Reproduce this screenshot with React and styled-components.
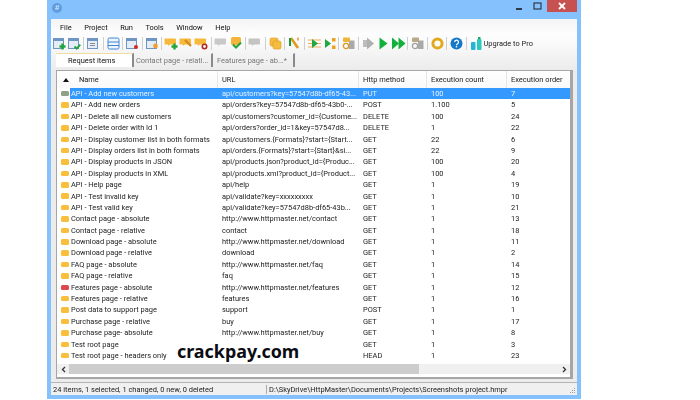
import React from 'react';
import styled, { createGlobalStyle } from 'styled-components';

const uiFont = `Roboto, 'Liberation Sans', Arial, sans-serif`
const uiSize = '7.45px'

const Reset = createGlobalStyle`
  html, body { margin: 0; padding: 0; background: #fff; }
`

const Page = styled.div`
  position: relative;
  width: 700px;
  height: 400px;
  overflow: hidden;
  background: #fff;
  font-family: ${uiFont};
`

const Frame = styled.div`
  margin-left: 47px;
  width: 534px;
  height: 399px;
  background: #85c2fd;
  display: flex;
  flex-direction: column;
  filter: blur(0.4px);
`

const TitleBar = styled.div`
  height: 19px;
  flex: none;
  display: flex;
  align-items: flex-start;
  justify-content: space-between;
  padding: 0 4px 0 4px;
`

const AppIcon = styled.div`
  width: 10px;
  height: 10px;
  margin: 3px 0 0 1px;
  border-radius: 50%;
  background: #5f9de0;
  color: #d7e8fa;
  font-size: 8px;
  line-height: 10px;
  text-align: center;
`

const WindowButtons = styled.div`
  display: flex;
  align-items: flex-start;
`

const WinBtn = styled.div`
  width: 19px;
  height: 12px;
  display: flex;
  align-items: center;
  justify-content: center;
`

const CloseBtn = styled.div`
  width: 30px;
  height: 12px;
  background: #c75050;
  color: #fff;
  display: flex;
  align-items: center;
  justify-content: center;
`

const Client = styled.div`
  flex: 1;
  margin: 0 4px 4px;
  display: flex;
  flex-direction: column;
  background: linear-gradient(#f4f4f4 0, #fdfdfd 14px, #fbfbfb 22px, #ececec 50px);
  min-height: 0;
`

const MenuBar = styled.div`
  height: 16px;
  flex: none;
  display: flex;
  align-items: center;
  gap: 12.5px;
  padding-left: 9px;
  font-size: ${uiSize};
  color: #111;
`

const ToolBar = styled.div`
  height: 18px;
  flex: none;
  display: flex;
  align-items: center;
  padding-left: 0.5px;
`

const ToolIcon = styled.svg`
  width: 15px;
  height: 15px;
  flex: none;
  margin-top: -2px;
`

const ToolSep = styled.div`
  width: 1px;
  height: 13px;
  flex: none;
  margin: -2px 2px 0 1.5px;
  background: #cfcfcf;
`

const UpgradeLabel = styled.span`
  margin: -2px 0 0 0;
  font-size: ${uiSize};
  color: #222;
`

const TabStrip = styled.div`
  height: 17px;
  flex: none;
  display: flex;
  padding-left: 5px;
`

const Tab = styled.div`
  height: 14px;
  width: ${p => p.$width}px;
  box-sizing: border-box;
  font-size: ${uiSize};
  line-height: 14px;
  white-space: nowrap;
  overflow: hidden;
  padding-left: ${p => p.$pad}px;
  color: ${p => (p.$active ? '#111' : '#777')};
  background: ${p => (p.$active ? '#fff' : 'transparent')};
  border-top: 1px solid ${p => (p.$active ? '#f3dca0' : 'transparent')};
  border-right: 2px solid #8a8a8a;
  margin-right: 1px;
`

const Panel = styled.div`
  height: 309px;
  flex: none;
  margin: 0 4px 0 5px;
  box-sizing: border-box;
  background: #fff;
  border: 1px solid #a6a6a6;
  border-bottom-width: 2px;
  border-right-width: 3px;
  color: #222;
  font-size: ${uiSize};
  display: flex;
  flex-direction: column;
`

const HeaderRow = styled.div`
  height: 17px;
  flex: none;
  display: grid;
  grid-template-columns: 161px 141px 68px 80px 1fr;
  background: linear-gradient(#fff, #f9f9f9);
`

const HeaderCell = styled.div`
  display: flex;
  align-items: center;
  padding-left: ${p => p.$pad || 4}px;
  border-right: 1px solid #e6e6e6;
  color: #222;
  line-height: 17px;
  white-space: nowrap;
  overflow: hidden;
  &:last-child { border-right: none; }
`

const SortArrow = styled.span`
  width: 0;
  height: 0;
  margin: 0 10px 0 -16px;
  border-left: 3px solid transparent;
  border-right: 3px solid transparent;
  border-bottom: 4px solid #111;
`

const Rows = styled.div`
  flex: 1;
  min-height: 0;
`

const Row = styled.div`
  height: 11.4px;
  display: flex;
`

const RowIconBox = styled.div`
  width: 13px;
  flex: none;
  display: flex;
  align-items: center;
  padding-left: 4px;
  box-sizing: border-box;
`

const Envelope = styled.div`
  width: 8px;
  height: 5.5px;
  border-radius: 1.5px;
  background: ${p => (p.$tone === 'red' ? '#e0474c' : p.$tone === 'done' ? '#8fa085' : '#f9bf3b')};
`

const RowBody = styled.div`
  flex: 1;
  display: grid;
  grid-template-columns: 148px 141px 68px 80px 1fr;
  background: ${p => (p.$selected ? '#3399ff' : 'transparent')};
  color: ${p => (p.$selected ? '#e6f2ff' : '#222')};
  line-height: 12.4px;
`

const Cell = styled.div`
  padding-left: ${p => p.$pad || 4}px;
  white-space: nowrap;
  overflow: hidden;
`

const HScroll = styled.div`
  height: 10px;
  flex: none;
  margin-bottom: 3px;
  display: flex;
  align-items: center;
  background: #f0f0f0;
  color: #444;
`

const ScrollArrow = styled.div`
  width: 12px;
  flex: none;
  display: flex;
  justify-content: center;
`

const ScrollThumb = styled.div`
  width: 350px;
  height: 10px;
  flex: none;
  background: #cdcdcd;
`

const ScrollRest = styled.div`
  flex: 1;
`

const StatusBar = styled.div`
  margin-top: 3px;
  flex: 1;
  display: flex;
  align-items: center;
  background: #f0f0f0;
  border-top: 1px solid #b5b5b5;
  font-size: ${uiSize};
  color: #222;
`

const StatusLeft = styled.div`
  width: 216px;
  flex: none;
  padding-left: 2px;
  box-sizing: border-box;
  border-right: 1px solid #aaa;
  white-space: nowrap;
`

const StatusRight = styled.div`
  flex: 1;
  padding-left: 2px;
  white-space: nowrap;
`

const Grip = styled.svg`
  width: 7px;
  height: 7px;
  flex: none;
  align-self: flex-end;
  margin: 0 1px 1px 0;
`

const Watermark = styled.div`
  position: absolute;
  left: 177px;
  top: 338px;
  font-family: 'Noto Sans', sans-serif;
  font-weight: 700;
  font-size: 17.9px;
  line-height: 26px;
  color: #0c0c14;
`

const Badge = ({ kind }) => {
  if (kind === 'plus') return <path d="M10.5 7.5v6M7.5 10.5h6" stroke="#22a53c" strokeWidth="2.4" />
  if (kind === 'check') return <path d="M7.5 10.5l2.2 2.2 3.6-4" fill="none" stroke="#22a53c" strokeWidth="1.8" />
  if (kind === 'red') return <circle cx="11" cy="11" r="2" fill="#d02a20" />
  if (kind === 'gear') return <circle cx="10.5" cy="10" r="2.4" fill="#f0a030" />
  if (kind === 'wrench') return <path d="M6 4l6 6" stroke="#d98a1e" strokeWidth="2.4" />
  if (kind === 'ring') return <circle cx="10.5" cy="10.5" r="2.2" fill="none" stroke="#b0281e" strokeWidth="1.6" />
  return null
}

const DocIcon = ({ badge, lines }) => (
  <ToolIcon viewBox="0 0 15 15">
    <rect x="1.5" y="2.5" width="10" height="10" fill="#e4ecf6" stroke="#6f95c4" />
    <rect x="1.5" y="2.5" width="10" height="2.5" fill="#6f95c4" />
    {lines && <path d="M4 7.5h5M4 9.5h5" stroke="#8d8d8d" />}
    <Badge kind={badge} />
  </ToolIcon>
)

const SaveIcon = () => (
  <ToolIcon viewBox="0 0 15 15">
    <rect x="2" y="2" width="11" height="11" rx="1.5" fill="#eef5fc" stroke="#3f86d6" />
    <path d="M2 6h11M2 9.5h11" stroke="#3f86d6" />
  </ToolIcon>
)

const MailIcon = ({ badge, color = '#f6b93b' }) => (
  <ToolIcon viewBox="0 0 15 15">
    <path d="M1 2.5h10a1 1 0 0 1 1 1v4a1 1 0 0 1-1 1H6L4 10V8.500H1a.5.5 0 0 1-.5-.5V3a.5.5 0 0 1 .5-.5z" fill={color} />
    <Badge kind={badge} />
  </ToolIcon>
)

const BigMailCheck = () => (
  <ToolIcon viewBox="0 0 15 15">
    <rect x="2" y="1" width="10" height="8" rx="1.5" fill="#f6b53a" />
    <path d="M4 8.500l3 3 5-5" fill="none" stroke="#22a53c" strokeWidth="2" />
  </ToolIcon>
)

const StackIcon = () => (
  <ToolIcon viewBox="0 0 15 15">
    <rect x="2" y="2" width="8" height="8" rx="1.500" fill="#f5bd3f" stroke="#dc9a20" strokeWidth="0.6" />
    <rect x="5" y="5" width="8" height="8" rx="1.500" fill="#f5bd3f" stroke="#dc9a20" strokeWidth="0.6" />
  </ToolIcon>
)

const WandIcon = () => (
  <ToolIcon viewBox="0 0 15 15">
    <path d="M4 2l7 10" stroke="#e09a1c" strokeWidth="2.600" />
    <path d="M3 2v8" stroke="#169c3c" strokeWidth="2" />
    <path d="M11 1.500v3" stroke="#e09a1c" strokeWidth="1.500" />
  </ToolIcon>
)

const LinesPlayIcon = () => (
  <ToolIcon viewBox="0 0 15 15">
    <path d="M1 4h13M1 7.500h13M1 11h13" stroke="#f0b055" strokeWidth="1.200" />
    <path d="M5 3l6 4.500-6 4.500z" fill="#1fa83c" />
  </ToolIcon>
)

const BranchIcon = () => (
  <ToolIcon viewBox="0 0 15 15">
    <path d="M3 3l6 4.500-6 4.500z" fill="#1fa83c" />
    <rect x="10" y="2" width="3.500" height="3.500" fill="#eea020" />
    <rect x="10" y="9.500" width="3.500" height="3.500" fill="#eea020" />
  </ToolIcon>
)

const ServerIcon = ({ gray }) => (
  <ToolIcon viewBox="0 0 15 15">
    <rect x="8" y="4.500" width="5.500" height="8.500" fill="#a9a9a9" />
    <rect x="2" y="1.500" width="7" height="4.500" rx="1" fill={gray ? '#b9a98a' : '#efb43a'} />
    <circle cx="5" cy="10" r="2.600" fill="none" stroke={gray ? '#a2a2a2' : '#dc9a20'} strokeWidth="1.300" />
  </ToolIcon>
)

const PlayIcon = ({ color = '#12b03c' }) => (
  <ToolIcon viewBox="0 0 15 15">
    <path d="M3.500 1.500l8 6-8 6z" fill={color} />
  </ToolIcon>
)

const DoublePlayIcon = () => (
  <ToolIcon viewBox="0 0 15 15">
    <path d="M1 1.500l7 6-7 6z" fill="#12b03c" />
    <path d="M7.500 1.500l7 6-7 6z" fill="#12b03c" />
  </ToolIcon>
)

const GrayForwardIcon = () => (
  <ToolIcon viewBox="0 0 15 15">
    <rect x="2" y="4" width="5" height="7" fill="#bdbdbd" />
    <path d="M6 1.500l7 6-7 6z" fill="#b0b0b0" />
  </ToolIcon>
)

const RingIcon = () => (
  <ToolIcon viewBox="0 0 15 15">
    <circle cx="7.500" cy="7.500" r="4.600" fill="none" stroke="#e2a91f" strokeWidth="3" />
  </ToolIcon>
)

const HelpIcon = () => (
  <ToolIcon viewBox="0 0 15 15">
    <circle cx="7.500" cy="7.500" r="6" fill="#1678c8" />
    <path d="M5.700 6a1.900 1.900 0 1 1 2.800 1.700c-.7.400-1 .7-1 1.500" fill="none" stroke="#fff" strokeWidth="1.300" />
    <rect x="6.800" y="10" width="1.400" height="1.400" fill="#fff" />
  </ToolIcon>
)

const UpgradeIcon = () => (
  <ToolIcon viewBox="0 0 15 15">
    <rect x="2" y="6" width="4.500" height="8" rx="1" fill="#22b5d8" />
    <rect x="8" y="3" width="4.500" height="11" rx="1" fill="#2cc8c0" />
    <rect x="9" y="1" width="2.500" height="2" fill="#2aa060" />
  </ToolIcon>
)

const rows = [
  ['API - Add new customers', 'api/customers?key=57547d8b-df65-43...', 'PUT', '100', '7', 'done'],
  ['API - Add new orders', 'api/orders?key=57547d8b-df65-43b0-...', 'POST', '1.100', '5'],
  ['API - Delete all new customers', 'api/customers?customer_id={Custome...', 'DELETE', '100', '24'],
  ['API - Delete order with Id 1', 'api/orders?order_id=1&key=57547d8...', 'DELETE', '1', '22'],
  ['API - Display customer list in both formats', 'api/customers.{Formats}?start={Start...', 'GET', '22', '6'],
  ['API - Display orders list in both formats', 'api/orders.{Formats}?start={Start}&si...', 'GET', '22', '9'],
  ['API - Display products in JSON', 'api/products.json?product_id={Produc...', 'GET', '100', '20'],
  ['API - Display products in XML', 'api/products.xml?product_id={Product...', 'GET', '100', '4'],
  ['API - Help page', 'api/help', 'GET', '1', '19'],
  ['API - Test invalid key', 'api/validate?key=xxxxxxxxx', 'GET', '1', '10'],
  ['API - Test valid key', 'api/validate?key=57547d8b-df65-43b...', 'GET', '1', '21'],
  ['Contact page - absolute', 'http://www.httpmaster.net/contact', 'GET', '1', '13'],
  ['Contact page - relative', 'contact', 'GET', '1', '18'],
  ['Download page - absolute', 'http://www.httpmaster.net/download', 'GET', '1', '11'],
  ['Download page - relative', 'download', 'GET', '1', '2'],
  ['FAQ page - absolute', 'http://www.httpmaster.net/faq', 'GET', '1', '14'],
  ['FAQ page - relative', 'faq', 'GET', '1', '15'],
  ['Features page - absolute', 'http://www.httpmaster.net/features', 'GET', '1', '12', 'red'],
  ['Features page - relative', 'features', 'GET', '1', '16'],
  ['Post data to support page', 'support', 'POST', '1', '1'],
  ['Purchase page - relative', 'buy', 'GET', '1', '17'],
  ['Purchase page- absolute', 'http://www.httpmaster.net/buy', 'GET', '1', '8'],
  ['Test root page', '', 'GET', '1', '3'],
  ['Test root page - headers only', '', 'HEAD', '1', '23'],
]

const App = () => (
  <Page>
    <Reset />
    <Frame>
      <TitleBar>
        <AppIcon>#</AppIcon>
        <WindowButtons>
          <WinBtn>
            <svg width="8" height="8" viewBox="0 0 8 8"><rect x="1" y="6" width="6" height="2" fill="#2d3a4a" /></svg>
          </WinBtn>
          <WinBtn>
            <svg width="9" height="8" viewBox="0 0 9 8"><rect x="1" y="1" width="7" height="6" fill="none" stroke="#2d3a4a" strokeWidth="1.200" /></svg>
          </WinBtn>
          <CloseBtn>
            <svg width="8" height="8" viewBox="0 0 8 8"><path d="M1 1l6 6M7 1l-6 6" stroke="#fff" strokeWidth="1.800" /></svg>
          </CloseBtn>
        </WindowButtons>
      </TitleBar>
      <Client>
        <MenuBar>
          <span>File</span>
          <span>Project</span>
          <span>Run</span>
          <span>Tools</span>
          <span>Window</span>
          <span>Help</span>
        </MenuBar>
        <ToolBar>
          <DocIcon badge="plus" />
          <DocIcon badge="check" />
          <ToolSep />
          <DocIcon lines />
          <ToolSep />
          <SaveIcon />
          <ToolSep />
          <DocIcon badge="red" />
          <ToolSep />
          <DocIcon badge="gear" />
          <ToolSep />
          <MailIcon badge="plus" />
          <MailIcon badge="wrench" />
          <MailIcon badge="ring" />
          <ToolSep />
          <MailIcon color="#c9c9c9" />
          <BigMailCheck />
          <ToolSep />
          <MailIcon color="#c4c4c4" />
          <ToolSep />
          <StackIcon />
          <ToolSep />
          <WandIcon />
          <ToolSep />
          <LinesPlayIcon />
          <BranchIcon />
          <ToolSep />
          <ServerIcon />
          <ToolSep />
          <GrayForwardIcon />
          <PlayIcon />
          <DoublePlayIcon />
          <ToolSep />
          <ServerIcon gray />
          <ToolSep />
          <RingIcon />
          <ToolSep />
          <HelpIcon />
          <ToolSep />
          <UpgradeIcon />
          <UpgradeLabel>Upgrade to Pro</UpgradeLabel>
        </ToolBar>
        <TabStrip>
          <Tab $active $width={78} $pad={12}>Request items</Tab>
          <Tab $width={78} $pad={1}>Contact page - relati...</Tab>
          <Tab $width={81} $pad={3}>Features page - ab...*</Tab>
        </TabStrip>
        <Panel>
          <HeaderRow>
            <HeaderCell $pad={22}><SortArrow />Name</HeaderCell>
            <HeaderCell>URL</HeaderCell>
            <HeaderCell>Http method</HeaderCell>
            <HeaderCell>Execution count</HeaderCell>
            <HeaderCell>Execution order</HeaderCell>
          </HeaderRow>
          <Rows>
            {rows.map(([name, url, method, count, order, tone], i) => (
              <Row key={name}>
                <RowIconBox><Envelope $tone={tone} /></RowIconBox>
                <RowBody $selected={i === 0}>
                  <Cell $pad={1}>{name}</Cell>
                  <Cell>{url}</Cell>
                  <Cell>{method}</Cell>
                  <Cell>{count}</Cell>
                  <Cell>{order}</Cell>
                </RowBody>
              </Row>
            ))}
          </Rows>
          <HScroll>
            <ScrollArrow>
              <svg width="5" height="7" viewBox="0 0 5 7"><path d="M4 1L1.500 3.500 4 6" fill="none" stroke="#333" strokeWidth="1.300" /></svg>
            </ScrollArrow>
            <ScrollThumb />
            <ScrollRest />
            <ScrollArrow>
              <svg width="5" height="7" viewBox="0 0 5 7"><path d="M1 1l2.500 2.500L1 6" fill="none" stroke="#333" strokeWidth="1.300" /></svg>
            </ScrollArrow>
          </HScroll>
        </Panel>
        <StatusBar>
          <StatusLeft>24 items, 1 selected, 1 changed, 0 new, 0 deleted</StatusLeft>
          <StatusRight>D:\SkyDrive\HttpMaster\Documents\Projects\Screenshots project.hmpr</StatusRight>
          <Grip viewBox="0 0 7 7">
            <path d="M5 1h1v1H5zM3 3h1v1H3zM5 3h1v1H5zM1 5h1v1H1zM3 5h1v1H3zM5 5h1v1H5z" fill="#9a9a9a" />
          </Grip>
        </StatusBar>
      </Client>
    </Frame>
    <Watermark>crackpay.com</Watermark>
  </Page>
);

export default App;
